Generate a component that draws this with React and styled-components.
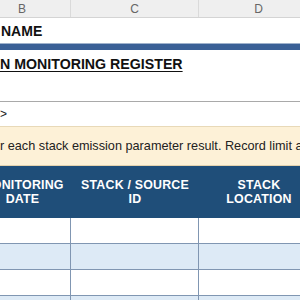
import React from 'react';
import styled, { createGlobalStyle } from 'styled-components';

const GlobalStyle = createGlobalStyle`
  html, body {
    margin: 0;
    padding: 0;
    background: #ffffff;
    overflow: hidden;
  }
  body {
    font-family: "Liberation Sans", Arial, sans-serif;
  }
`;

// column widths: B is partly off screen on the left
const COLS = '97px 128px 120px';

const Sheet = styled.div`
  width: 345px;
  margin-left: -26px;
`;

const ColHeaderRow = styled.div`
  display: grid;
  grid-template-columns: ${COLS};
  height: 17px;
  background: #efefef;
  border-bottom: 1px solid #d4d4d4;
`;

const ColLetter = styled.div`
  display: flex;
  align-items: center;
  justify-content: center;
  font-family: "Liberation Sans", Arial, sans-serif;
  font-size: 12px;
  color: #666666;
  border-right: 1px solid #dadada;
`;

const Row = styled.div`
  height: ${(p) => p.h}px;
  display: flex;
  align-items: center;
  padding-left: 26px;
  background: ${(p) => p.bg || '#ffffff'};
  border-bottom: ${(p) => (p.line ? `1px solid ${p.line}` : 'none')};
  box-sizing: border-box;
  white-space: nowrap;
  overflow: hidden;
`;

const NameText = styled.span`
  font-weight: bold;
  font-size: 14px;
  color: #111111;
  margin-left: 1px;
`;

const Bar = styled.div`
  height: 7px;
  background: #3a6096;
  border-top: 1px solid #9fb2cc;
  box-sizing: border-box;
`;

const Title = styled.span`
  font-weight: bold;
  font-size: 14.2px;
  color: #111111;
  text-decoration: underline;
  text-decoration-thickness: 1px;
  text-underline-offset: 2px;
`;

const Plain = styled.span`
  font-size: 12px;
  color: #222222;
`;

const Note = styled.div`
  height: 40px;
  display: flex;
  align-items: center;
  padding-left: 26px;
  background: #fdf1d7;
  border-top: 1px solid #e8d9b8;
  border-bottom: 1px solid #e3d2ae;
  box-sizing: border-box;
  white-space: nowrap;
  overflow: hidden;
  font-size: 12.7px;
  color: #222222;
`;

const HeadRow = styled.div`
  display: grid;
  grid-template-columns: ${COLS};
  height: 52px;
  background: #1f4e79;
`;

const HeadCell = styled.div`
  display: flex;
  align-items: center;
  justify-content: center;
  text-align: center;
  color: #ffffff;
  font-weight: bold;
  font-size: 12.4px;
  line-height: 14px;
  letter-spacing: 0.2px;
  white-space: pre-line;
`;

const DataRow = styled.div`
  display: grid;
  grid-template-columns: ${COLS};
  height: 26px;
  background: ${(p) => (p.alt ? '#ddeaf6' : '#ffffff')};
  border-bottom: 1px solid #8096b2;
  box-sizing: border-box;
`;

const DataCell = styled.div`
  border-right: 1px solid #8096b2;
`;

const headers = ['MONITORING\nDATE', 'STACK / SOURCE\nID', 'STACK\nLOCATION'];

const App = () => (
  <>
    <GlobalStyle />
    <Sheet>
      <ColHeaderRow>
        <ColLetter>B</ColLetter>
        <ColLetter>C</ColLetter>
        <ColLetter>D</ColLetter>
      </ColHeaderRow>
      <Row h={25}>
        <NameText>NAME</NameText>
      </Row>
      <Bar />
      <Row h={27}>
        <Title>N MONITORING REGISTER</Title>
      </Row>
      <Row h={25} line="#a9a9a9" />
      <Row h={24}>
        <Plain>&gt;</Plain>
      </Row>
      <Note>r each stack emission parameter result. Record limit a</Note>
      <HeadRow>
        {headers.map((h) => (
          <HeadCell key={h}>{h}</HeadCell>
        ))}
      </HeadRow>
      {[0, 1, 2, 3].map((i) => (
        <DataRow key={i} alt={i % 2 === 1}>
          <DataCell />
          <DataCell />
          <DataCell />
        </DataRow>
      ))}
    </Sheet>
  </>
);

export default App;
